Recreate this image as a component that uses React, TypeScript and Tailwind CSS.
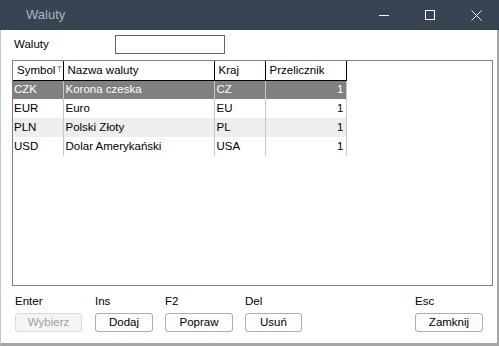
import React from "react";

type Row = { symbol: string; name: string; country: string; rate: string };

const rows: Row[] = [
  { symbol: "CZK", name: "Korona czeska", country: "CZ", rate: "1" },
  { symbol: "EUR", name: "Euro", country: "EU", rate: "1" },
  { symbol: "PLN", name: "Polski Złoty", country: "PL", rate: "1" },
  { symbol: "USD", name: "Dolar Amerykański", country: "USA", rate: "1" },
];

function Btn({ label, width, disabled }: { label: string; width: string; disabled?: boolean }) {
  return (
    <button
      className={`${width} h-[19px] rounded-[3px] border text-[11.5px] leading-none ${
        disabled
          ? "border-[#dcdcdc] bg-[#f4f4f4] text-[#a0a0a0]"
          : "border-[#adadad] bg-[#fdfdfd] text-black"
      }`}
    >
      {label}
    </button>
  );
}

export default function App() {
  const rowBg = (i: number) =>
    i === 0 ? "bg-[#808080] text-white" : i === 2 ? "bg-[#eeeeee] text-black" : "bg-white text-black";

  return (
    <div
      className="flex h-[346px] w-[499px] flex-col bg-white"
      style={{ fontFamily: '"Liberation Sans", Arial, sans-serif' }}
    >
      {/* title bar */}
      <div className="flex h-[30px] shrink-0 items-center bg-[#394453]">
        <span className="ml-[26px] text-[13px] text-[#aab4c1]">Waluty</span>
        <div className="ml-auto flex h-full items-center">
          <div className="flex w-[46px] justify-center">
            <div className="h-px w-[10px] bg-white" />
          </div>
          <div className="flex w-[46px] justify-center">
            <div className="h-[10px] w-[10px] border border-white" />
          </div>
          <div className="flex w-[46px] justify-center">
            <svg width="11" height="11" viewBox="0 0 11 11">
              <path d="M0.5 0.5 L10.5 10.5 M10.5 0.5 L0.5 10.5" stroke="#ffffff" strokeWidth="1" />
            </svg>
          </div>
        </div>
      </div>

      {/* body */}
      <div className="flex min-h-0 flex-1 border-b-[3px] border-l border-r-2 border-b-[#a6a6a6] border-l-[#c8c8c8] border-r-[#a6a6a6]">
        <div className="flex flex-1 flex-col pl-[11px] pr-[4px]">
          <div className="mt-[5px] flex h-[19px] items-center">
            <span className="ml-[2px] w-[101px] text-[11.5px] text-black">Waluty</span>
            <div className="h-[19px] w-[110px] border border-[#646464] bg-white" />
          </div>

          <div className="mt-[6px] h-[226px] border border-[#808080] bg-white">
            <table className="w-[333px] table-fixed border-collapse text-[11.5px]">
              <colgroup>
                <col className="w-[50px]" />
                <col className="w-[151px]" />
                <col className="w-[51px]" />
                <col className="w-[81px]" />
              </colgroup>
              <thead>
                <tr className="h-[19px] border-b border-black">
                  <th className="overflow-hidden border-r border-black pl-[4px] text-left font-normal">
                    <span className="flex items-center">
                      Symbol
                      <svg width="5" height="6" viewBox="0 0 5 6" className="ml-[2px] mb-[3px] shrink-0">
                        <path d="M0 0 H5 L3 2.5 V6 H2 V2.5 Z" fill="#a8a8a8" />
                      </svg>
                    </span>
                  </th>
                  <th className="border-r border-black pl-[4px] text-left font-normal">Nazwa waluty</th>
                  <th className="border-r border-black pl-[4px] text-left font-normal">Kraj</th>
                  <th className="border-r border-black pl-[4px] text-left font-normal">Przelicznik</th>
                </tr>
              </thead>
              <tbody>
                {rows.map((r, i) => (
                  <tr key={r.symbol} className={`h-[19px] ${rowBg(i)}`}>
                    <td className="border-r border-[#c8c8c8] pl-[1px]">{r.symbol}</td>
                    <td className="border-r border-[#c8c8c8] pl-[2px]">{r.name}</td>
                    <td className="border-r border-[#c8c8c8] pl-[2px]">{r.country}</td>
                    <td className="border-r border-[#c8c8c8] pr-[2px] text-right">{r.rate}</td>
                  </tr>
                ))}
              </tbody>
            </table>
          </div>

          <div className="mt-[8px] flex text-[11.5px] text-black">
            <div className="ml-[3px] flex w-[80px] flex-col gap-[5px]">
              <span className="leading-[14px]">Enter</span>
              <Btn label="Wybierz" width="w-[67px]" disabled />
            </div>
            <div className="flex w-[70px] flex-col gap-[5px]">
              <span className="leading-[14px]">Ins</span>
              <Btn label="Dodaj" width="w-[58px]" />
            </div>
            <div className="flex w-[80px] flex-col gap-[5px]">
              <span className="leading-[14px]">F2</span>
              <Btn label="Popraw" width="w-[68px]" />
            </div>
            <div className="flex w-[57px] flex-col gap-[5px]">
              <span className="leading-[14px]">Del</span>
              <Btn label="Usuń" width="w-[57px]" />
            </div>
            <div className="ml-auto mr-[10px] flex w-[68px] flex-col gap-[5px]">
              <span className="leading-[14px]">Esc</span>
              <Btn label="Zamknij" width="w-[68px]" />
            </div>
          </div>
        </div>
      </div>
    </div>
  );
}
